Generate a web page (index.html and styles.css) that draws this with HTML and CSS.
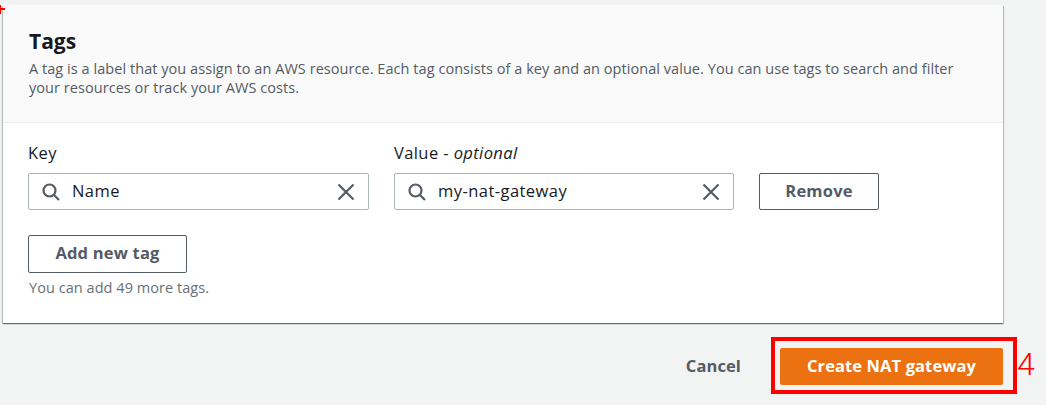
FILE: index.html
```html
<!DOCTYPE html>
<html>
  <head>
    <meta charset="utf-8">
    <title>Create NAT gateway</title>
    <link rel="stylesheet" href="styles.css">
  </head>
  <body>
    <div class="mark-plus"></div>
    <section class="card">
      <header class="card-head">
        <h2>Tags</h2>
        <p>A tag is a label that you assign to an AWS resource. Each tag consists of a key and an optional value. You can use tags to search and filter your resources or track your AWS costs.</p>
      </header>
      <div class="card-body">
        <div class="tag-row">
          <div class="field">
            <label>Key</label>
            <div class="input">
              <svg class="icon" viewBox="0 0 18 18"><circle cx="7.5" cy="7.5" r="6"/><path d="M12 12l5 5"/></svg>
              <span class="input-text">Name</span>
              <svg class="icon" viewBox="0 0 18 18"><path d="M1.5 1.5l15 15M16.5 1.5l-15 15"/></svg>
            </div>
          </div>
          <div class="field">
            <label>Value - <em>optional</em></label>
            <div class="input">
              <svg class="icon" viewBox="0 0 18 18"><circle cx="7.5" cy="7.5" r="6"/><path d="M12 12l5 5"/></svg>
              <span class="input-text">my-nat-gateway</span>
              <svg class="icon" viewBox="0 0 18 18"><path d="M1.5 1.5l15 15M16.5 1.5l-15 15"/></svg>
            </div>
          </div>
          <button class="btn btn-remove">Remove</button>
        </div>
        <button class="btn btn-add">Add new tag</button>
        <p class="hint">You can add 49 more tags.</p>
      </div>
    </section>
    <footer class="actions">
      <button class="btn-cancel">Cancel</button>
      <div class="highlight">
        <button class="btn-primary">Create NAT gateway</button>
        <span class="step">4</span>
      </div>
    </footer>
  </body>
</html>
```

FILE: styles.css
```css
html, body { margin: 0; padding: 0; height: 100%; }
body { background-color: #f2f3f3; font-family: "Open Sans", "Noto Sans", sans-serif; color: #16191f; padding: 5px 0 0 3px; box-sizing: border-box; overflow: hidden; position: relative; }
.mark-plus { position: absolute; left: 0; top: 5px; width: 5px; height: 9px; z-index: 1; }
.mark-plus::before { content: ""; position: absolute; left: 0; top: 3px; width: 5px; height: 2px; background-color: #f00; }
.mark-plus::after { content: ""; position: absolute; left: 0; top: 0; width: 1px; height: 9px; background-color: #f00; }
.card { width: 1000px; height: 318px; box-sizing: border-box; background-color: #fff; box-shadow: 0 1px 1px 0 rgba(0,28,36,0.4), 1px 1px 1px 0 rgba(0,28,36,0.2), -1px 1px 1px 0 rgba(0,28,36,0.2); }
.card-head { height: 118px; box-sizing: border-box; background-color: #fafafa; border-bottom: 1px solid #eaeded; padding: 23px 26px 0; }
.card-head h2 { margin: 0; font-size: 21px; line-height: 26px; font-weight: 700; }
.card-head p { margin: 5px 0 0; font-size: 14.5px; line-height: 19px; color: #545b64; letter-spacing: 0.05px; }
.card-body { padding: 19px 25px 0; }
.tag-row { display: flex; align-items: flex-end; gap: 25px; margin-bottom: 25px; }
.field { display: flex; flex-direction: column; }
.field:first-child { width: 341px; }
.field:nth-child(2) { width: 340px; }
.field label { font-size: 16.5px; line-height: 22px; letter-spacing: 0.4px; margin-bottom: 9px; }
.input { height: 37px; box-sizing: border-box; display: flex; align-items: center; gap: 12px; padding: 0 13px; background-color: #fff; border: 1px solid #aab7b8; border-radius: 2px; }
.input-text { flex: 1; font-size: 16.5px; letter-spacing: 0.45px; padding-bottom: 3px; }
.icon { width: 18px; height: 18px; fill: none; stroke: #545b64; stroke-width: 2.2; flex-shrink: 0; }
.btn { font-family: inherit; font-size: 16.5px; font-weight: 700; letter-spacing: 0.2px; color: #545b64; background-color: #fff; border: 1px solid #545b64; border-radius: 2px; box-sizing: border-box; padding: 0 0 3px; }
.btn-remove { width: 120px; height: 37px; }
.btn-add { width: 159px; height: 38px; display: block; }
.hint { margin: 5px 0 0 1px; font-size: 14.5px; line-height: 20px; letter-spacing: 0.05px; color: #687078; }
.actions { display: flex; justify-content: flex-end; align-items: center; width: 1014px; margin-top: 14px; gap: 30px; }
.btn-cancel { font-family: inherit; font-size: 16.5px; font-weight: 700; letter-spacing: 0.1px; color: #545b64; background: none; border: none; padding: 0; }
.highlight { width: 246px; height: 57px; box-sizing: border-box; border: 4px solid #f00; padding: 7px 5px; position: relative; }
.btn-primary { display: block; width: 223px; height: 37px; font-family: inherit; font-size: 16.5px; font-weight: 700; letter-spacing: 0.1px; color: #fff; background-color: #ec7211; border: none; border-radius: 2px; padding: 0 0 2px; }
.step { position: absolute; left: 242px; top: 5px; color: #f00; font: 300 32px/36px Roboto, sans-serif; }
```
